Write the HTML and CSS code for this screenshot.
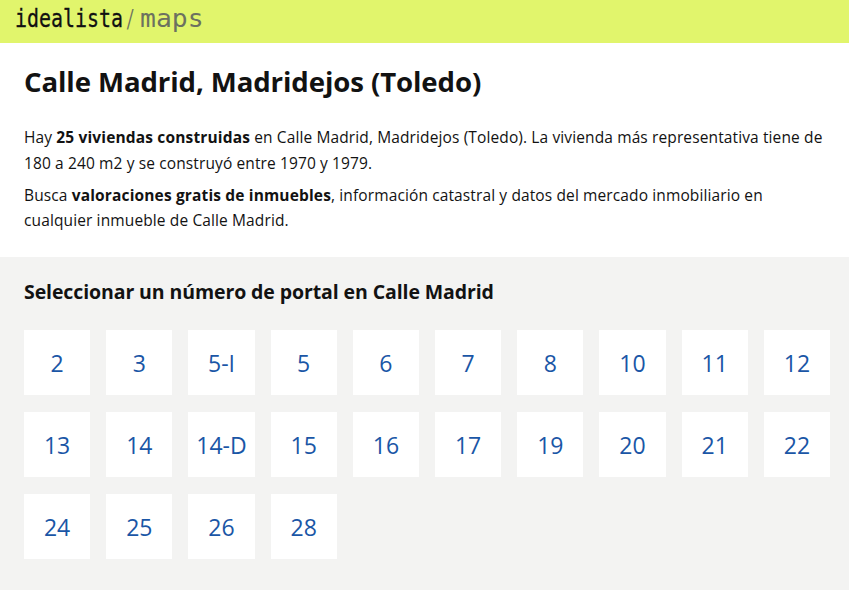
FILE: index.html
```html
<!DOCTYPE html>
<html lang="es">
<head>
    <meta charset="UTF-8">
    <meta name="viewport" content="width=device-width, initial-scale=1.0">
    <title>Calle Madrid, Madridejos (Toledo)</title>
    <link rel="stylesheet" href="styles.css">
</head>
<body>

<div class="topbar">
    <span class="logo-name">idealista</span><span class="logo-slash">/</span><span class="logo-maps">maps</span>
</div>

<div class="intro">
    <h1>Calle Madrid, Madridejos (Toledo)</h1>
    <p>Hay <b>25 viviendas construidas</b> en Calle Madrid, Madridejos (Toledo). La vivienda más representativa tiene de 180 a 240 m2 y se construyó entre 1970 y 1979.</p>
    <p>Busca <b>valoraciones gratis de inmuebles</b>, información catastral y datos del mercado inmobiliario en cualquier inmueble de Calle Madrid.</p>
</div>

<div class="portals">
    <h2>Seleccionar un número de portal en Calle Madrid</h2>
    <div class="portal-grid">
        <a class="portal">2</a>
        <a class="portal">3</a>
        <a class="portal">5-I</a>
        <a class="portal">5</a>
        <a class="portal">6</a>
        <a class="portal">7</a>
        <a class="portal">8</a>
        <a class="portal">10</a>
        <a class="portal">11</a>
        <a class="portal">12</a>
        <a class="portal">13</a>
        <a class="portal">14</a>
        <a class="portal">14-D</a>
        <a class="portal">15</a>
        <a class="portal">16</a>
        <a class="portal">17</a>
        <a class="portal">19</a>
        <a class="portal">20</a>
        <a class="portal">21</a>
        <a class="portal">22</a>
        <a class="portal">24</a>
        <a class="portal">25</a>
        <a class="portal">26</a>
        <a class="portal">28</a>
    </div>
</div>

</body>
</html>
```

FILE: styles.css
```css
* { margin: 0; padding: 0; box-sizing: border-box; }

body {
    font-family: 'Open Sans', sans-serif;
    background: #f3f3f2;
    color: #121212;
    overflow: hidden;
}

/* --- Header --- */
.topbar {
    height: 43px;
    background: #e1f56c;
    padding: 4px 0 0 15px;
    font-family: 'DejaVu Sans Mono', monospace;
    font-size: 24px;
    line-height: 30px;
    white-space: nowrap;
}
.logo-name {
    display: inline-block;
    width: 111px;
    color: #111;
    -webkit-text-stroke: 0.3px #111;
    transform: scaleX(0.83);
    transform-origin: left;
}
.logo-slash {
    display: inline-block;
    width: 14px;
    color: #6c7160;
    transform: scaleX(0.6);
    transform-origin: left;
}
.logo-maps {
    display: inline-block;
    color: #6c7160;
    transform: scaleX(1.1);
    transform-origin: left;
}

/* --- Intro --- */
.intro {
    background: #fff;
    height: 214px;
    padding: 20px 24px 0;
}
.intro h1 {
    font-size: 27.6px;
    font-weight: 700;
    line-height: 36px;
    letter-spacing: -0.1px;
    margin-bottom: 26px;
}
.intro p {
    font-size: 15.5px;
    line-height: 25.5px;
    letter-spacing: 0.12px;
    margin-bottom: 6.5px;
}
.intro b { font-weight: 700; letter-spacing: 0.15px; }

/* --- Portales --- */
.portals { padding: 21px 19px 0 24px; }
.portals h2 {
    font-size: 19.5px;
    font-weight: 700;
    line-height: 27px;
    letter-spacing: -0.1px;
    margin-bottom: 25px;
}
.portal-grid {
    display: grid;
    grid-template-columns: repeat(10, 1fr);
    gap: 17px 16px;
}
.portal {
    height: 65px;
    background: #fff;
    color: #1a56a6;
    font-size: 23px;
    display: flex;
    align-items: center;
    justify-content: center;
}
```
